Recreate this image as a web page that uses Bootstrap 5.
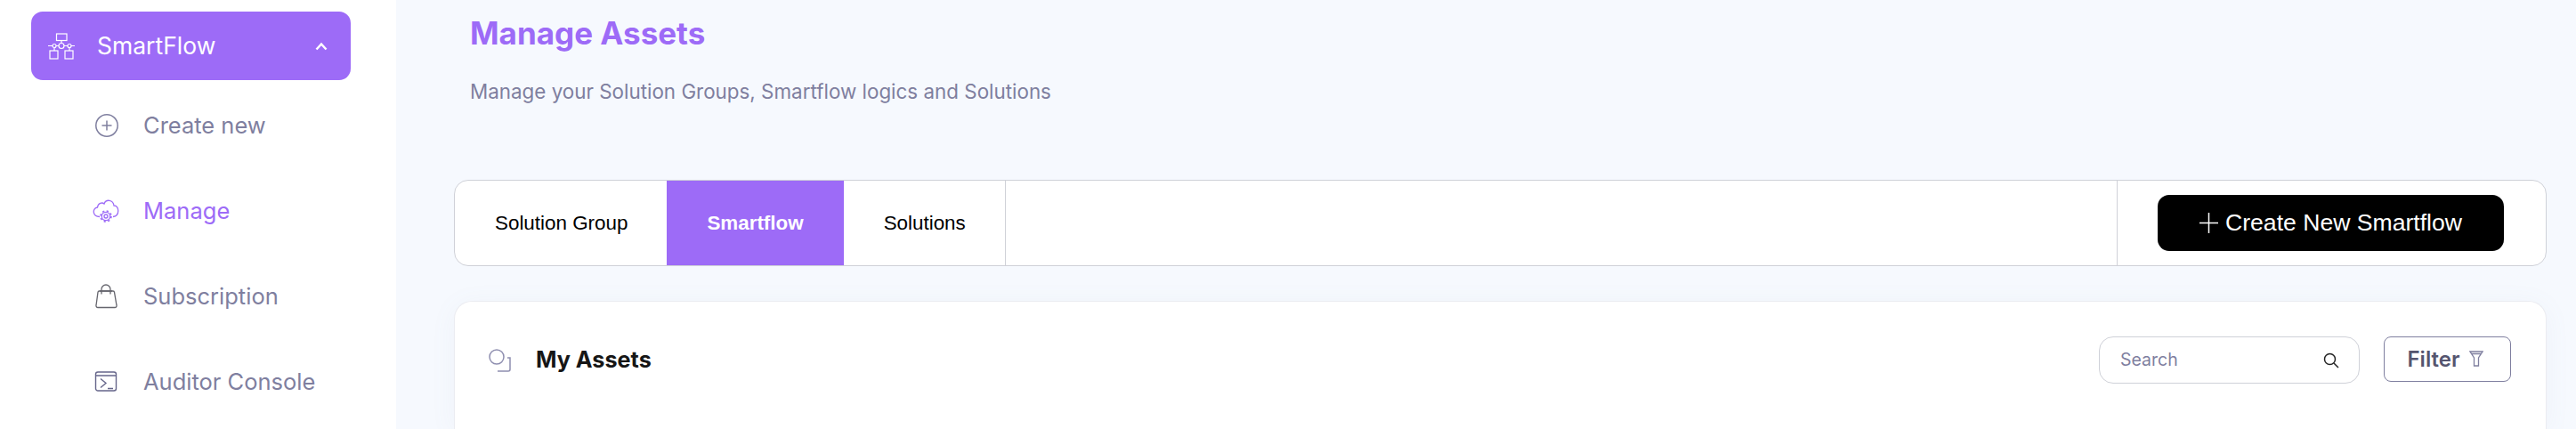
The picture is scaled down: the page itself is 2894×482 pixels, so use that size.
<!DOCTYPE html>
<html lang="en">
<head>
    <meta charset="UTF-8">
    <title>Manage Assets</title>
    <link href="https://cdn.jsdelivr.net/npm/bootstrap@5.3.0/dist/css/bootstrap.min.css" rel="stylesheet">
    <style>
        html, body { height: 482px; overflow: hidden; }
        body { background: #f6f9fe; font-family: "Inter", "Liberation Sans", sans-serif; }
        .side-panel { width: 445px; height: 482px; background: #fff; padding: 13px 51px 0 35px; flex: none; }
        .side-head { height: 77px; background: #9d6bf7; border-radius: 13px; color: #fff; padding: 0 26px 0 19px; font-size: 26.5px; }
        .side-head svg.flow-icon { width: 30px; height: 30px; margin-right: 25px; }
        .side-sub { list-style: none; margin: 0; padding: 3px 0 0 72px; }
        .side-sub li { height: 96px; color: #7f7f9f; font-size: 25.5px; }
        .side-sub li.is-current { color: #9d6bf7; }
        .side-sub svg { width: 28px; height: 28px; margin-right: 26px; flex: none; overflow: visible; }
        .main-area { flex: 1; padding: 0 33px 0 65px; min-width: 0; }
        .page-title { color: #9d6bf7; font-size: 35px; font-weight: 700; margin: 15px 0 0 18px; line-height: 44px; }
        .page-sub { color: #7f7f9f; font-size: 22.4px; margin: 29px 0 0 18px; line-height: 30px; }
        .tab-bar { height: 97px; margin-top: 84px; background: #fff; border: 1px solid #cfd1d8; border-radius: 16px; overflow: hidden; font-family: "Liberation Sans", sans-serif; }
        .tab-cell { padding: 0 44px 0 45px; font-size: 22.4px; color: #000; display: flex; align-items: center; }
        .tab-cell.is-on { background: #9d6bf7; color: #fff; font-weight: 700; padding: 0 45px; }
        .tab-cell.with-rule { border-right: 1px solid #cfd1d8; }
        .tab-action { border-left: 1px solid #cfd1d8; padding: 0 47px 0 45px; }
        .new-btn { width: 389px; height: 63px; background: #000; color: #fff; border: 0; border-radius: 13px; font-size: 26.6px; font-family: "Liberation Sans", sans-serif; }
        .new-btn:hover { background: #000; color: #fff; }
        .asset-panel { margin-top: 39px; height: 144px; background: #fff; border: 1px solid #ebecf1; border-bottom: 0; border-radius: 20px 20px 0 0; box-shadow: 0 4px 30px rgba(120, 130, 170, .06); padding: 39px 39px 0 38px; }
        .head-row { height: 53px; }
        .asset-title { font-size: 25.2px; font-weight: 700; color: #161616; margin: 0 0 0 27px; }
        .search-box { width: 293px; height: 53px; border: 1px solid #cfd1d8; border-radius: 16px; padding: 0 22px 0 21px; }
        .search-box input { border: 0; outline: 0; width: 100%; font-size: 19.5px; color: #7f7f9f; background: transparent; }
        .search-box input::placeholder { color: #7f7f9f; }
        .filter-btn { width: 143px; height: 51px; margin-left: 27px; padding: 0 16px 0 12px; border: 1px solid #7f7f9f; border-radius: 8px; background: #fff; color: #55556f; font-size: 24px; font-weight: 600; }
        .filter-gap { gap: 11px; }
    </style>
</head>
<body>
    <div class="d-flex">
        <!-- sidebar -->
        <aside class="side-panel">
            <div class="side-head d-flex align-items-center">
                <svg class="flow-icon" viewBox="0 0 30 30" fill="none" stroke="#fff" stroke-width="1.200">
                    <rect x="9.500" y="1" width="11.500" height="7.500"/>
                    <path d="M15 8.500v3M0 14.500h5M9 14.500h3M18 14.500h4M26 14.500h4M7 16.500V20M24 16.500V20"/>
                    <circle cx="7" cy="14.500" r="2"/><circle cx="15" cy="14.500" r="3"/><circle cx="24" cy="14.500" r="2"/>
                    <rect x="2" y="20" width="9" height="9"/><rect x="19" y="20" width="9" height="9"/>
                </svg>
                <span class="flex-grow-1">SmartFlow</span>
                <svg width="14" height="10" viewBox="0 0 14 10" fill="none" stroke="#fff" stroke-width="2.500"><path d="M1.500 8.500 7 2.500l5.500 6"/></svg>
            </div>
            <ul class="side-sub">
                <li class="d-flex align-items-center">
                    <svg viewBox="0 0 28 28" fill="none" stroke="#7f7f9f" stroke-width="1.500"><circle cx="13" cy="14" r="12.200"/><path d="M13 8.500v11M7.500 14h11"/></svg>
                    Create new
                </li>
                <li class="d-flex align-items-center is-current">
                    <svg viewBox="0 0 28 28" fill="none" stroke="#9d6bf7" stroke-width="1.300">
                        <path d="M5 20.500C-3 20.500-4 11 2.500 10 3 5 8 4 10 6 12 .5 20 1 21 8c6-.5 7 11.500-1 12.500"/>
                        <circle cx="12" cy="20" r="2"/><circle cx="12" cy="20" r="4.700"/>
                        <circle cx="12" cy="20" r="6" stroke-width="1.600" stroke-dasharray="2.200 2.510"/>
                    </svg>
                    Manage
                </li>
                <li class="d-flex align-items-center">
                    <svg viewBox="0 0 28 28" fill="none" stroke="#66666e" stroke-width="1.300"><path d="M4.500 8h15.500a1.500 1.500 0 0 1 1.500 1.300l2.500 14.700a2 2 0 0 1-2 2.500H3a2 2 0 0 1-2-2.500l2-14.700A1.500 1.500 0 0 1 4.500 8z"/><path d="M7 11.500V6a5 5 0 0 1 10 0v5.500M5 8h14"/></svg>
                    Subscription
                </li>
                <li class="d-flex align-items-center">
                    <svg viewBox="0 0 28 28" fill="none" stroke="#66668a" stroke-width="1.400"><rect x=".500" y="3" width="23" height="21" rx="2.500"/><path d="M.500 7h23M6 10.500l6 5-6 5M14 21.500h6"/></svg>
                    Auditor Console
                </li>
            </ul>
        </aside>

        <!-- main -->
        <main class="main-area">
            <h1 class="page-title">Manage Assets</h1>
            <p class="page-sub">Manage your Solution Groups, Smartflow logics and Solutions</p>

            <div class="tab-bar d-flex">
                <div class="tab-cell">Solution Group</div>
                <div class="tab-cell is-on">Smartflow</div>
                <div class="tab-cell with-rule">Solutions</div>
                <div class="flex-grow-1"></div>
                <div class="tab-action d-flex align-items-center">
                    <button class="btn new-btn d-flex align-items-center justify-content-center gap-2" type="button">
                        <svg width="21" height="23" viewBox="0 0 21 23" fill="none" stroke="#fff" stroke-width="1.500"><path d="M10.500 0v23M0 11.500h21"/></svg>
                        Create New Smartflow
                    </button>
                </div>
            </div>

            <div class="asset-panel">
                <div class="d-flex align-items-start">
                    <div class="head-row d-flex align-items-center flex-grow-1">
                        <svg width="26" height="26" viewBox="0 0 26 26" fill="none" stroke="#8f8fb0" stroke-width="1.500"><circle cx="9" cy="9" r="8"/><path d="M21 10h3v13a2 2 0 0 1-2 2H10"/></svg>
                        <h2 class="asset-title">My Assets</h2>
                    </div>
                    <div class="search-box d-flex align-items-center">
                        <input type="text" placeholder="Search">
                        <svg width="18" height="18" viewBox="0 0 18 18" fill="none" stroke="#222" stroke-width="1.500" class="flex-shrink-0"><circle cx="7.500" cy="7.500" r="6"/><path d="m12 12 5 5"/></svg>
                    </div>
                    <button class="btn filter-btn filter-gap d-flex align-items-center justify-content-center" type="button">Filter
                        <svg width="16" height="19" viewBox="0 0 16 19" fill="none" stroke="#7f7f9f" stroke-width="1.300"><path d="M1 1h14l-4.500 7v9h-5V8zM2.500 3.500h11"/></svg>
                    </button>
                </div>
            </div>
        </main>
    </div>
    <script src="https://cdn.jsdelivr.net/npm/bootstrap@5.3.0/dist/js/bootstrap.bundle.min.js"></script>
</body>
</html>
